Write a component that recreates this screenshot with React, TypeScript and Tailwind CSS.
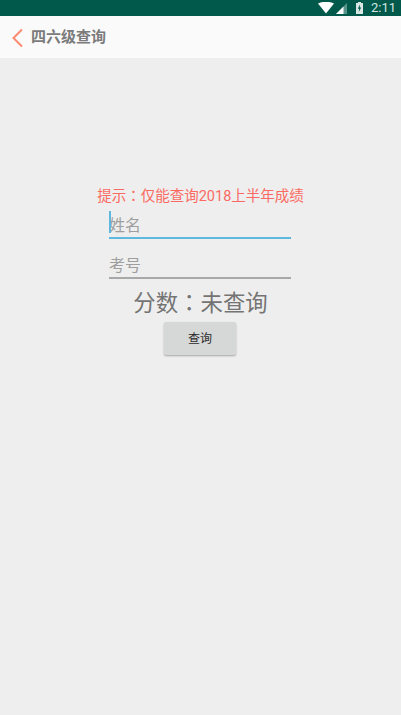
// App.tsx
const cjk = { fontFamily: '"Roboto", "Noto Sans CJK SC", sans-serif' };
const tc = { fontFamily: '"Noto Sans CJK TC", sans-serif' };

function StatusBar() {
  return (
    <div className="h-4 bg-[#00594a] flex items-center justify-end text-white">
      {/* wifi */}
      <svg width="16" height="12" viewBox="0 0 16 12" className="mr-[2px]">
        <path d="M0 1.5 Q8 -2 16 1.5 L8 11.5 Z" fill="#fff" />
      </svg>
      {/* signal */}
      <svg width="11" height="11" viewBox="0 0 11 11" className="mr-[9px]">
        <path d="M11 0 V11 H0 Z" fill="#fff" opacity="0.35" />
        <path d="M7.5 3.5 V11 H0 Z" fill="#fff" />
      </svg>
      {/* battery */}
      <svg width="7" height="12" viewBox="0 0 7 12" className="mr-[8px]">
        <path d="M2 0 H5 V1 H7 V12 H0 V1 H2 Z" fill="#fff" opacity="0.85" />
        <path d="M4 2.5 L1.8 6.8 H3.2 L2.8 10 L5.2 5.4 H3.8 Z" fill="#00594a" />
      </svg>
      <span className="text-[13px] leading-4 mr-[5px] text-[#d5e5e1]" style={cjk}>2:11</span>
    </div>
  );
}

function Header() {
  return (
    <div className="h-[42px] bg-[#fafafa] flex items-center">
      <svg width="12" height="20" viewBox="0 0 12 20" className="ml-3 mt-[1px]">
        <path d="M10 1.5 L1.5 10 L10 18.5" fill="none" stroke="#fb8a70" strokeWidth="2" />
      </svg>
      <span className="ml-[7px] mt-[1px] text-[15px] font-bold text-[#7b7b7b]" style={cjk}>四六级查询</span>
    </div>
  );
}

export default function App() {
  return (
    <div className="w-[401px] h-[715px] bg-[#eeeeee] flex flex-col" style={cjk}>
      <StatusBar />
      <Header />
      <div className="flex flex-col items-center pt-[127px]">
        <div className="text-[14.5px] leading-5 text-[#fb6a62]">
          提示<span style={tc}>：</span>仅能查询2018上半年成绩
        </div>
        <div className="w-[182px] mr-[1px] mt-[3px] h-[29px] pt-[5px] border-b-2 border-[#5fb8e0] relative flex items-center text-[16px] text-[#9e9e9e]">
          <div className="absolute left-0 top-[1px] h-[22px] w-[2px] bg-[#5fb8e0]"></div>
          姓名
        </div>
        <div className="w-[182px] mr-[1px] mt-[11px] h-[29px] pt-[5px] border-b-2 border-[#a8a8a8] flex items-center text-[16px] text-[#9e9e9e]">
          考号
        </div>
        <div className="mt-[10px] text-[22.4px] leading-[24px] text-[#747474]">
          分数<span style={tc}>：</span>未查询
        </div>
        <button className="mt-[7px] mr-[1px] w-[72px] h-[33px] bg-[#d6d7d7] rounded-[2px] shadow-[0_1px_2px_rgba(0,0,0,0.3)] text-[12px] text-[#2a2a2a]">
          查询
        </button>
      </div>
    </div>
  );
}
